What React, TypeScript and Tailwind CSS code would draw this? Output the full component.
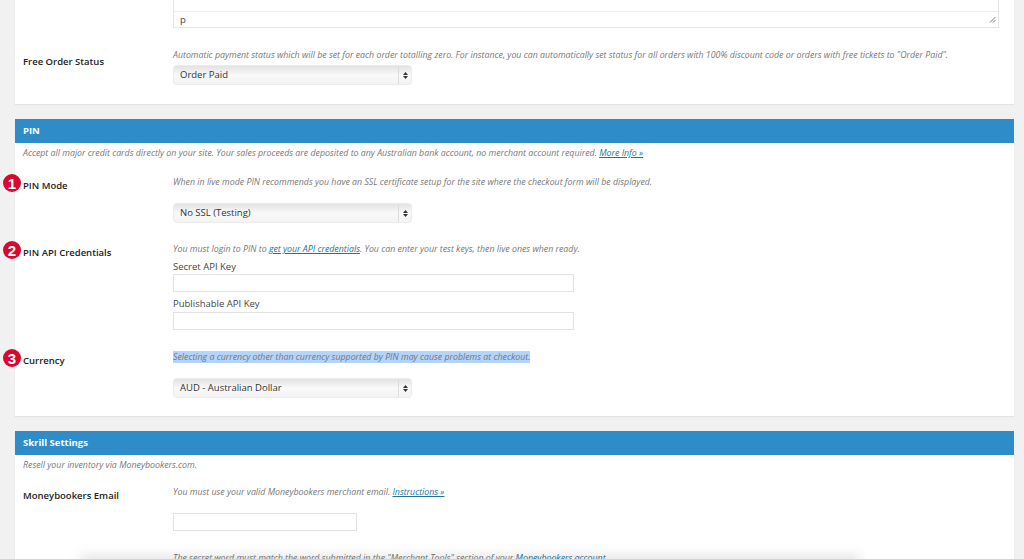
import type { ReactNode } from 'react';

/* ─── Small parts ─── */

function Link({ children }: { children: ReactNode }) {
  return <a className="text-[#21759b] underline">{children}</a>;
}

function Hint({ children, className = '' }: { children: ReactNode; className?: string }) {
  return <p className={`text-[8.8px] leading-[14px] italic text-[#777] ${className}`}>{children}</p>;
}

function Label({ children }: { children: ReactNode }) {
  return <div className="text-[9.5px] leading-[14px] font-semibold text-[#222]">{children}</div>;
}

function Marker({ n }: { n: number }) {
  return (
    <span className="absolute left-[-20px] top-[-1px] flex h-[18px] w-[18px] items-center justify-center rounded-full bg-[#d8082f] font-['Liberation_Sans',sans-serif] text-[15px] leading-none font-bold text-white">
      {n}
    </span>
  );
}

function FakeSelect({ value }: { value: string }) {
  return (
    <div className="ml-[1px] flex h-[18px] w-[237px] items-center justify-between rounded-[3px] bg-gradient-to-b from-[#e2e2e2] via-[#f9f9f9] to-[#f3f3f3] pl-[6px] shadow-[0_0_1.5px_rgba(0,0,0,0.4)]">
      <span className="text-[9.5px] text-[#333]">{value}</span>
      <span className="flex h-full w-[13px] flex-col items-center justify-center gap-[1px] border-l border-[#ddd]">
        <svg width="5" height="3" viewBox="0 0 5 3"><path d="M2.5 0L5 3H0z" fill="#333" /></svg>
        <svg width="5" height="3" viewBox="0 0 5 3"><path d="M2.5 3L5 0H0z" fill="#333" /></svg>
      </span>
    </div>
  );
}

function TextBox({ width }: { width: string }) {
  return <div className={`h-[18px] border border-[#e2e2e2] bg-white ${width}`} />;
}

function Header({ title }: { title: string }) {
  return (
    <div className="flex h-[24px] items-center bg-[#2e8dc8] pl-2 text-[9.5px] font-bold text-white">{title}</div>
  );
}

/* ─── Page ─── */

export default function App() {
  return (
    <div className="relative flex h-[559px] flex-col gap-[15px] overflow-hidden bg-[#f1f1f1] pl-[15px] pr-[10px] font-['Open_Sans',sans-serif]">
      {/* Free order status, cut by the top edge */}
      <section className="h-[104px] shrink-0 bg-white shadow-[0_1px_1px_rgba(0,0,0,0.06)]">
        <div className="ml-[158px] mr-[15px] flex h-[28px] items-end justify-between border-b border-x border-[#e6e6e6]">
          <div className="flex h-[16px] w-full items-center justify-between border-t border-[#eee] pl-[6px] pr-[2px]">
            <span className="text-[9.5px] leading-none text-[#444]">p</span>
            <svg width="7" height="7" viewBox="0 0 7 7"><path d="M6.5 1L1 6.5M6.5 4L4 6.5" stroke="#777" strokeWidth="1" /></svg>
          </div>
        </div>
        <div className="mt-[20px] grid grid-cols-[150px_1fr] pl-2">
          <div className="pt-[7px]"><Label>Free Order Status</Label></div>
          <div>
            <Hint className="mb-[4px]">
              Automatic payment status which will be set for each order totalling zero. For instance, you can automatically set status for all orders with 100% discount code or orders with free tickets to "Order Paid".
            </Hint>
            <FakeSelect value="Order Paid" />
          </div>
        </div>
      </section>

      {/* PIN */}
      <section className="h-[297px] shrink-0 bg-white shadow-[0_1px_1px_rgba(0,0,0,0.06)]">
        <Header title="PIN" />
        <Hint className="mt-[3px] pl-2">
          Accept all major credit cards directly on your site. Your sales proceeds are deposited to any Australian bank account, no merchant account required. <Link>More Info »</Link>
        </Hint>
        <div className="mt-[15px] grid grid-cols-[150px_1fr] pl-2">
          <div className="relative h-fit pt-[4px]">
            <Marker n={1} />
            <Label>PIN Mode</Label>
          </div>
          <div>
            <Hint className="mb-[15px]">When in live mode PIN recommends you have an SSL certificate setup for the site where the checkout form will be displayed.</Hint>
            <FakeSelect value="No SSL (Testing)" />
          </div>
        </div>
        <div className="mt-[20px] grid grid-cols-[150px_1fr] pl-2">
          <div className="relative h-fit pt-[4px]">
            <Marker n={2} />
            <Label>PIN API Credentials</Label>
          </div>
          <div>
            <Hint>
              You must login to PIN to <Link>get your API credentials</Link>. You can enter your test keys, then live ones when ready.
            </Hint>
            <div className="mt-[4px] text-[9.5px] leading-[14px] text-[#444]">Secret API Key</div>
            <TextBox width="w-[401px]" />
            <div className="mt-[5px] text-[9.5px] leading-[14px] text-[#444]">Publishable API Key</div>
            <TextBox width="w-[401px] mt-[1px]" />
          </div>
        </div>
        <div className="mt-[20px] grid grid-cols-[150px_1fr] pl-2">
          <div className="relative h-fit pt-[4px]">
            <Marker n={3} />
            <Label>Currency</Label>
          </div>
          <div>
            <Hint className="mb-[15px]">
              <span className="bg-[#b3d4fc]">Selecting a currency other than currency supported by PIN may cause problems at checkout.</span>
            </Hint>
            <FakeSelect value="AUD - Australian Dollar" />
          </div>
        </div>
      </section>

      {/* Skrill */}
      <section className="shrink-0 bg-white pb-10 shadow-[0_1px_1px_rgba(0,0,0,0.06)]">
        <Header title="Skrill Settings" />
        <Hint className="mt-[3px] pl-2">Resell your inventory via Moneybookers.com.</Hint>
        <div className="mt-[13px] grid grid-cols-[150px_1fr] pl-2">
          <div className="pt-[4px]"><Label>Moneybookers Email</Label></div>
          <div>
            <Hint className="mb-[14px]">
              You must use your valid Moneybookers merchant email. <Link>Instructions »</Link>
            </Hint>
            <TextBox width="w-[184px]" />
            <Hint className="mt-[20px]">
              The secret word must match the word submitted in the "Merchant Tools" section of your <Link>Moneybookers account</Link>.
            </Hint>
          </div>
        </div>
      </section>

      {/* Faint shadow over the bottom edge */}
      <div className="absolute bottom-[-10px] left-[80px] h-[14px] w-[780px] bg-black/10 blur-[6px]" />
    </div>
  );
}
